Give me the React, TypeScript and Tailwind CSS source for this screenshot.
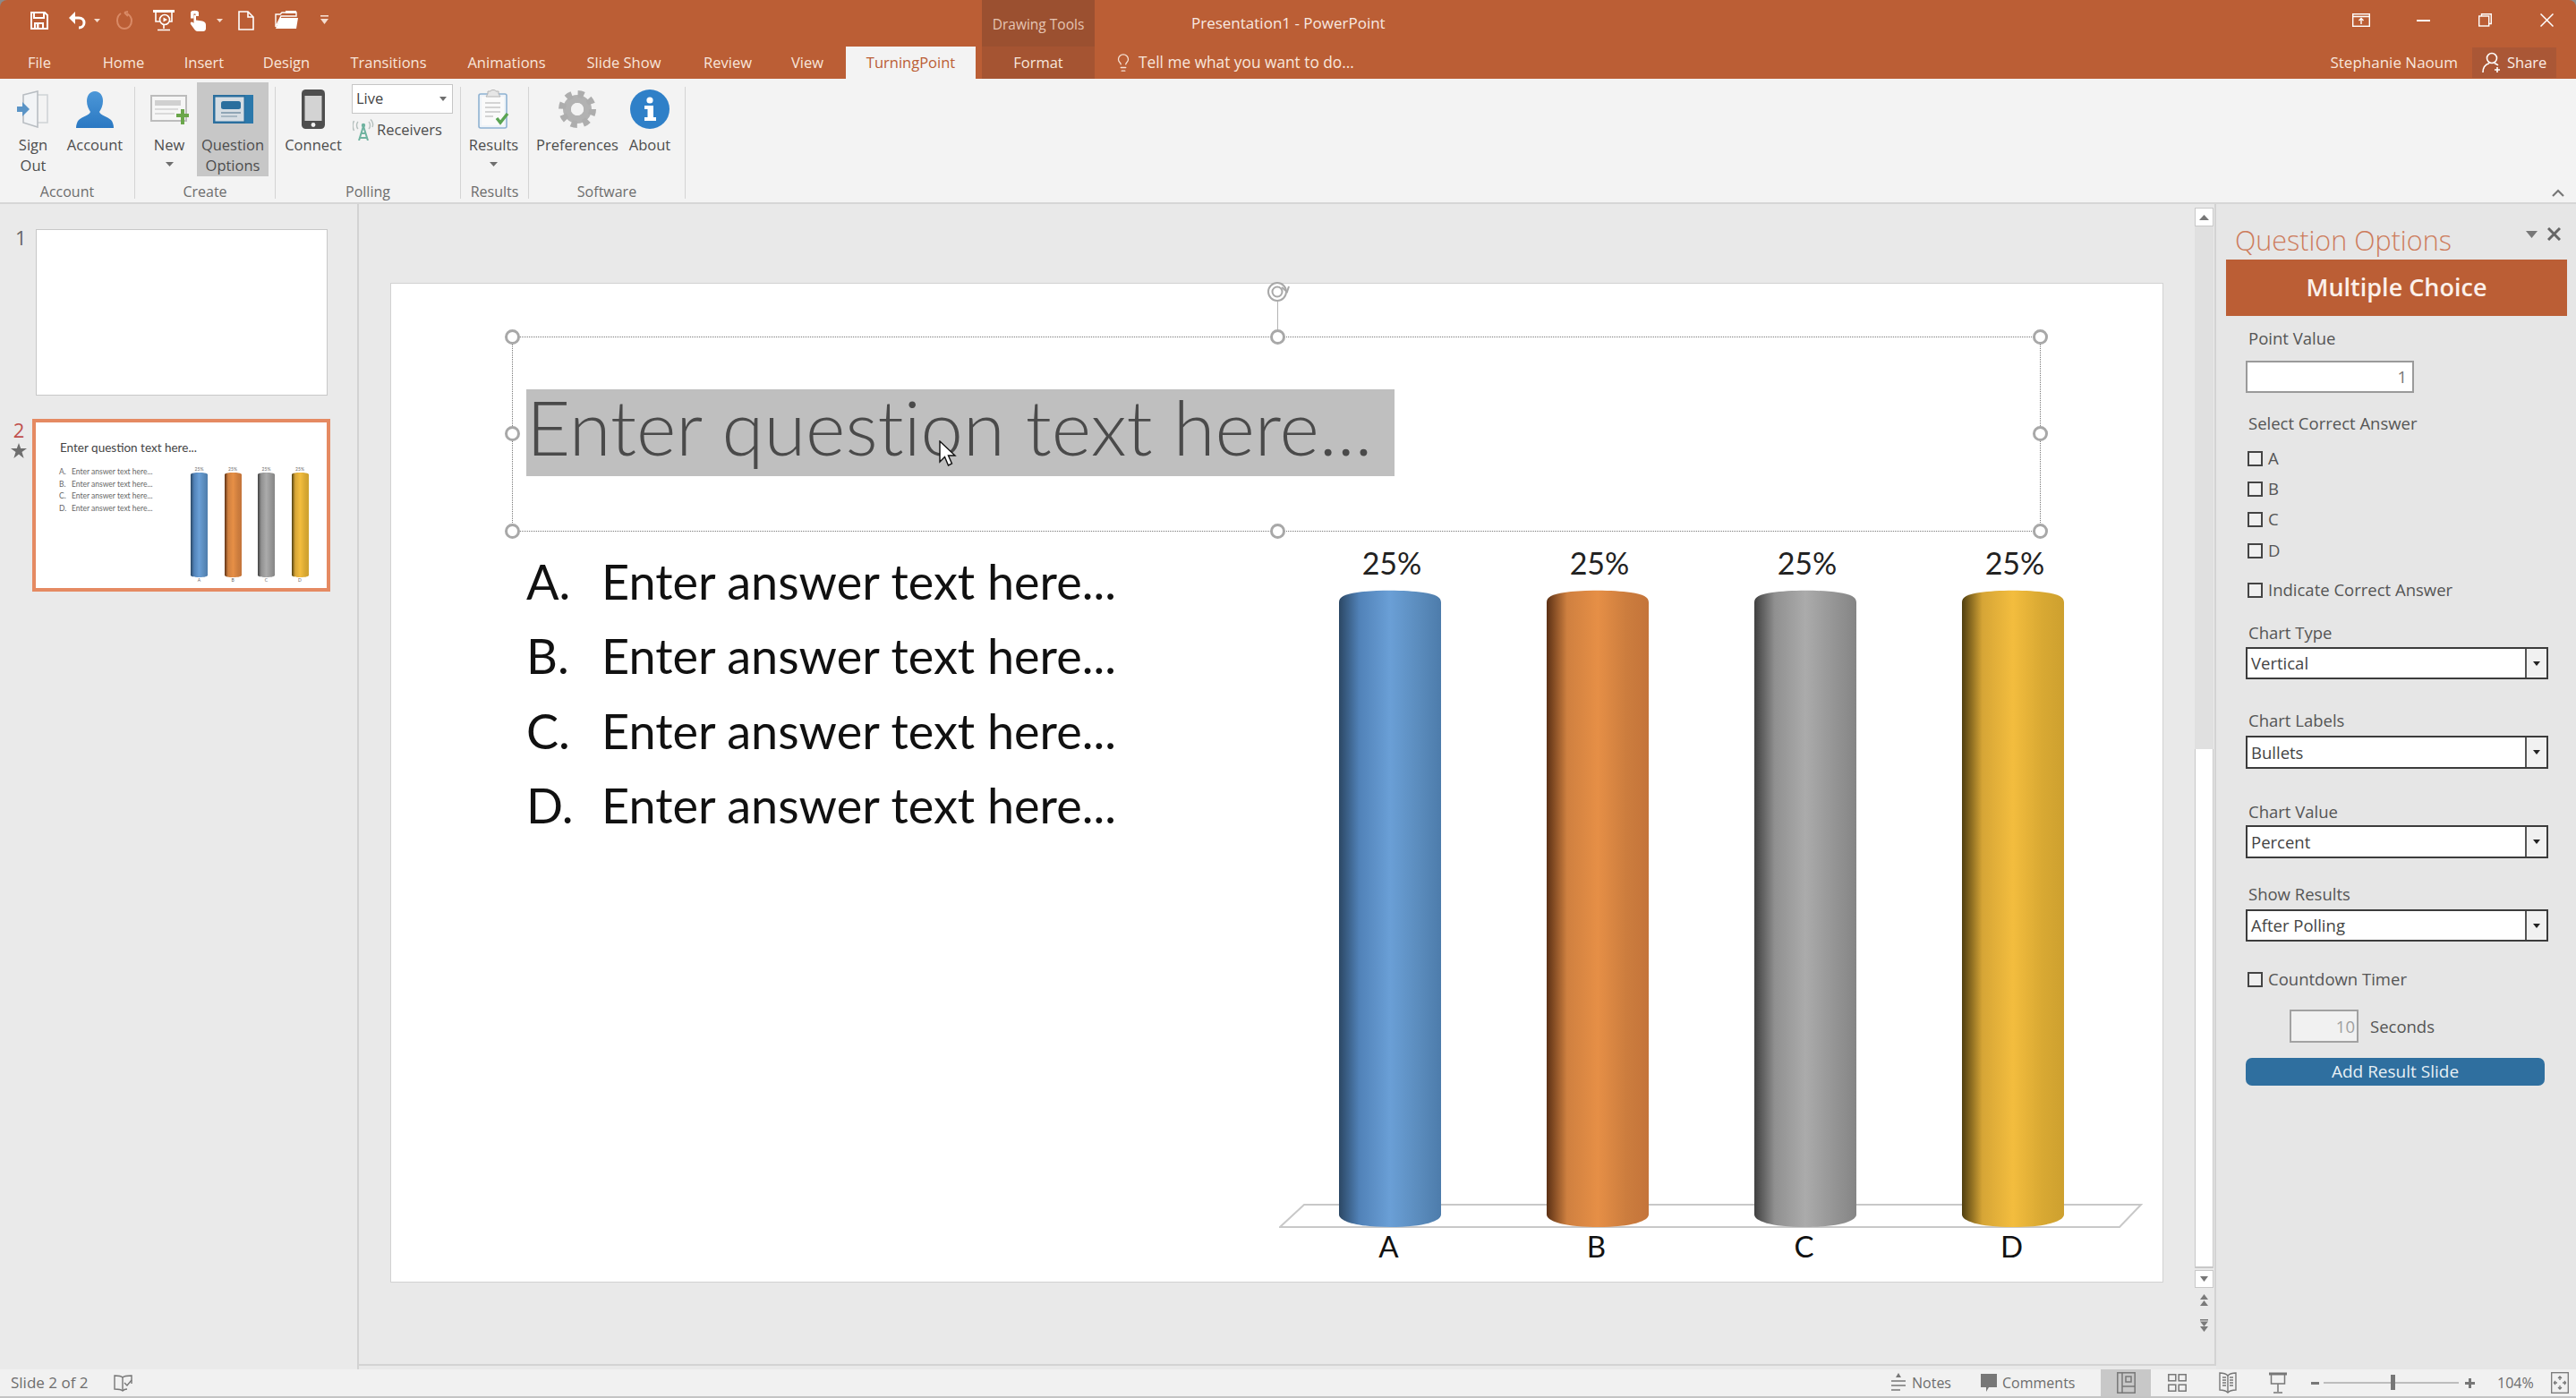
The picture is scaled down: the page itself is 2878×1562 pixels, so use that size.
import React from "react";
import { Lightbulb } from "lucide-react";

function Caret({ className = "", color = "#6e6e6e", w = 9, h = 5 }: { className?: string; color?: string; w?: number; h?: number }) {
  return (
    <svg width={w} height={h} viewBox="0 0 10 6" preserveAspectRatio="none" className={className}>
      <path d="M0 0H10L5 6Z" fill={color} />
    </svg>
  );
}

type CylProps = { id: string; w: number; h: number; c: string[] };
function Cyl({ id, w, h, c }: CylProps) {
  return (
    <svg width={w} height={h} viewBox="0 0 114 712" preserveAspectRatio="none" className="block">
      <defs>
        <linearGradient id={id} x1="0" x2="1" y1="0" y2="0">
          <stop offset="0" stopColor={c[0]} />
          <stop offset="0.2" stopColor={c[1]} />
          <stop offset="0.5" stopColor={c[2]} />
          <stop offset="0.78" stopColor={c[3]} />
          <stop offset="1" stopColor={c[4]} />
        </linearGradient>
      </defs>
      <path
        d="M0 14C0 8 6 5 20 3C40 0 74 0 94 3C108 5 114 8 114 14V698C114 705 96 712 57 712C18 712 0 705 0 698Z"
        fill={`url(#${id})`}
      />
    </svg>
  );
}

const BLUE = ["#2b4764", "#5182b8", "#6a9fd6", "#5b8cbd", "#4d7cab"];
const AMBER = ["#5b3014", "#cf8040", "#e68f46", "#cc7d3e", "#c4743a"];
const GRAY = ["#3f3f3f", "#909090", "#ababab", "#959595", "#858585"];
const GOLD = ["#4f3e10", "#d6a536", "#f3bd3e", "#d9a933", "#cda02f"];

/* ---------- title bar icons ---------- */
function SaveIcon() {
  return (
    <svg width="22" height="22" viewBox="0 0 22 22" fill="none" stroke="#fff" strokeWidth="2">
      <path d="M2 2H17L20 5V20H2Z" />
      <path d="M5 2V8H16V2" />
      <path d="M6 20V14H15V20" />
      <rect x="8" y="15" width="2.5" height="5" fill="#fff" stroke="none" />
    </svg>
  );
}
function UndoIcon({ color = "#fff" }: { color?: string }) {
  return (
    <svg width="20" height="22" viewBox="0 0 20 22" fill="none">
      <path d="M6 8H12C16 8 18 10.5 18 13.5C18 17 15 19 12 19" stroke={color} strokeWidth="3" />
      <path d="M8 1V15L1 8Z" fill={color} />
    </svg>
  );
}
function RedoIcon() {
  return (
    <svg width="18" height="22" viewBox="0 0 18 22" fill="none" stroke="#d98a66" strokeWidth="2">
      <path d="M5 3C2 5 1 8 1 11C1 16 4 20 9 20C14 20 17 16 17 11C17 8 15 5 12 3" />
      <path d="M9 2L13 1M9 2L13 6" />
    </svg>
  );
}
function PresenterIcon() {
  return (
    <svg width="24" height="24" viewBox="0 0 24 24" fill="none" stroke="#fff" strokeWidth="1.6">
      <path d="M0 1.5H24" strokeWidth="3" />
      <path d="M3 3V13H8M21 3V13H18" />
      <circle cx="13" cy="11" r="5.5" />
      <path d="M11.5 8.5L16 11L11.5 13.5Z" fill="#fff" stroke="none" />
      <path d="M12 17V21M5 22.5H19" />
    </svg>
  );
}
function TouchIcon() {
  return (
    <svg width="19" height="24" viewBox="0 0 19 24">
      <path d="M1 3C1 0 10 0 10 3V7H6.5V4.5H4.5V9.5H1Z" fill="#fff" />
      <path d="M4.5 7C4.5 5.2 7 5.2 7 7V11.5L14 12.5C17 13 18 15 18 17V21C18 23 16.5 24 15 24H8.5C7 24 6 23 5 21.5L1 16C0 14 2 12.5 3.5 14L4.5 15Z" fill="#fff" />
    </svg>
  );
}
function NewDocIcon() {
  return (
    <svg width="18" height="22" viewBox="0 0 18 22" fill="none" stroke="#fff" strokeWidth="1.6">
      <path d="M1 1H11L17 7V21H1Z" />
      <path d="M11 1V7H17" />
    </svg>
  );
}
function OpenIcon() {
  return (
    <svg width="26" height="22" viewBox="0 0 26 22">
      <path d="M1 4H6L8 2H24V6H7L1 18Z" fill="none" stroke="#fff" strokeWidth="1.4" />
      <path d="M6 8H26L24 20H1Z" fill="#fff" />
      <path d="M12 0H24V3H12Z" fill="#fff" />
    </svg>
  );
}
function CustomizeIcon() {
  return (
    <svg width="9" height="11" viewBox="0 0 9 11">
      <path d="M0 0H9V1.6H0Z" fill="#f4dccf" />
      <path d="M0 4H9L4.5 10Z" fill="#f4dccf" />
    </svg>
  );
}

/* ---------- ribbon icons ---------- */
function SignOutIcon() {
  return (
    <svg width="36" height="42" viewBox="0 0 36 42" fill="none">
      <path d="M7 5H34V36H7" stroke="#d0d3d6" strokeWidth="1.6" />
      <path d="M7 5L23 1V41L7 36Z" fill="#f2f4f6" stroke="#b8bdc2" strokeWidth="1.6" />
      <path d="M0 18H6V13L14 21L6 29V24H0Z" fill="#5a94c6" />
    </svg>
  );
}
function AccountIcon() {
  return (
    <svg width="42" height="41" viewBox="0 0 42 41">
      <defs>
        <linearGradient id="acc" x1="0" x2="0" y1="0" y2="1">
          <stop offset="0" stopColor="#4c97d8" />
          <stop offset="1" stopColor="#2a78c2" />
        </linearGradient>
      </defs>
      <path
        d="M21 0C27 0 30 5 30 11C30 16 28 20 26 23C27 27 35 28 39 32C41 34 42 38 42 41H0C0 38 1 34 3 32C7 28 15 27 16 23C14 20 12 16 12 11C12 5 15 0 21 0Z"
        fill="url(#acc)"
      />
    </svg>
  );
}
function NewIcon() {
  return (
    <svg width="43" height="33" viewBox="0 0 43 33">
      <rect x="1" y="1" width="39" height="28" fill="#f6f6f6" stroke="#bcbcbc" strokeWidth="2" />
      <rect x="5" y="6" width="29" height="6" fill="#d0d0d0" />
      <rect x="5" y="15" width="26" height="2" fill="#dadada" />
      <rect x="5" y="20" width="22" height="2" fill="#dadada" />
      <path d="M29 21H34V16H38V21H43V25H38V33H34V25H29Z" fill="#6aa64a" />
    </svg>
  );
}
function QuestionIcon() {
  return (
    <svg width="45" height="32" viewBox="0 0 45 32">
      <rect x="0" y="0" width="45" height="32" fill="#2b6f9e" />
      <rect x="2.5" y="2.5" width="32" height="27" fill="#d6dde3" />
      <rect x="36" y="0" width="9" height="32" fill="#2b78ab" />
      <rect x="9" y="7" width="22" height="9" rx="2.5" fill="#2b6f9e" />
      <rect x="9" y="19" width="22" height="2" fill="#8fa5b5" />
      <rect x="9" y="23" width="18" height="2" fill="#a7b7c3" />
    </svg>
  );
}
function PhoneIcon() {
  return (
    <svg width="26" height="44" viewBox="0 0 26 44">
      <rect width="26" height="44" rx="4.5" fill="#4e4e4e" />
      <rect x="3.5" y="7" width="19" height="28" fill="#d3d3d3" />
      <circle cx="13" cy="39.5" r="2.4" fill="#f2f2f2" />
    </svg>
  );
}
function ReceiverIcon() {
  return (
    <svg width="24" height="24" viewBox="0 0 24 24" fill="none">
      <path d="M12 8L7 24M12 8L17 24M9.5 16H14.5M8 21H16" stroke="#6fb3a0" strokeWidth="2" />
      <circle cx="12" cy="7" r="2.2" fill="#6fb3a0" />
      <path d="M6 3C4 5 4 9 6 11M1.5 2C-0.5 6 -0.5 9 1.5 13M18 3C20 5 20 9 18 11M20 0.5C23 3 23 7 22 9" stroke="#b4bfbd" strokeWidth="1.4" />
    </svg>
  );
}
function ResultsIcon() {
  return (
    <svg width="36" height="44" viewBox="0 0 36 44" fill="none">
      <rect x="1" y="5" width="31" height="38" rx="2" fill="#eef3f8" stroke="#8fb2d2" strokeWidth="1.6" />
      <rect x="4" y="8" width="25" height="32" fill="#fafafa" />
      <path d="M11 5V2H14C14 0 20 0 20 2H23V5L25 8H9Z" fill="#e6e6e6" stroke="#b4b4b4" strokeWidth="1" />
      <path d="M8 15H25M8 20H25M8 25H25M8 30H17" stroke="#c8c8c8" strokeWidth="1.6" />
      <path d="M21 32L25 37L33 27" stroke="#5aa452" strokeWidth="3.4" />
    </svg>
  );
}
function GearIcon() {
  return (
    <svg width="42" height="42" viewBox="0 0 42 42" fill="none">
      <circle cx="21" cy="21" r="11.5" stroke="#b2b2b2" strokeWidth="9" />
      <circle cx="21" cy="21" r="17" stroke="#adadad" strokeWidth="8" strokeDasharray="6.68 6.68" />
      <circle cx="21" cy="21" r="7" fill="#f3f3f3" />
    </svg>
  );
}
function InfoIcon() {
  return (
    <svg width="44" height="44" viewBox="0 0 44 44">
      <circle cx="22" cy="22" r="22" fill="#2f80c8" />
      <circle cx="22" cy="12" r="3.6" fill="#fff" />
      <path d="M16 18H26V31H29V35H16V31H19.5V22H16Z" fill="#fff" />
    </svg>
  );
}

function RButton({ icon, lines, w, cls = "", caret = false }: { icon: React.ReactNode; lines: string[]; w: string; cls?: string; caret?: boolean }) {
  return (
    <div className={`flex flex-col items-center ${w} ${cls}`}>
      <div className="flex h-[58px] w-full items-center justify-center pt-[2px]">{icon}</div>
      {lines.map((t) => (
        <div key={t} className="whitespace-nowrap text-center text-[16.5px] leading-[23px] text-[#4d4d4d]">
          {t}
        </div>
      ))}
      {caret && <Caret className="mt-[8px]" />}
    </div>
  );
}

function RGroup({ w, label, children }: { w: string; label: string; children: React.ReactNode }) {
  return (
    <div className={`flex flex-col ${w}`}>
      <div className="flex h-[114px] pt-[4px]">{children}</div>
      <div className="h-[24px] text-center text-[16px] leading-[24px] text-[#6d6d6d]">{label}</div>
    </div>
  );
}
const RSep = () => <div className="mt-[9px] h-[125px] w-[1px] bg-[#d4d4d4]" />;

function Tab({ t, w }: { t: string; w: string }) {
  return <div className={`${w} text-center text-[16.5px] leading-[36px] text-[#f8e6dc]`}>{t}</div>;
}

/* ---------- task pane ---------- */
function Check({ label, mt }: { label: string; mt: string }) {
  return (
    <div className={`flex h-[24px] items-center ${mt}`}>
      <div className="ml-[2px] h-[17px] w-[17px] border-2 border-[#444] bg-[#f0f0f0]" />
      <span className="ml-[6px] text-[18.5px] text-[#555]">{label}</span>
    </div>
  );
}
function Label({ t, mt }: { t: string; mt: string }) {
  return <div className={`ml-[3px] h-[24px] text-[18.5px] leading-[24px] text-[#555] ${mt}`}>{t}</div>;
}
function Select({ v, mt, h }: { v: string; mt: string; h: string }) {
  return (
    <div className={`flex w-[338px] border-2 border-[#3c3c3c] bg-white ${mt} ${h}`}>
      <div className="flex flex-1 items-center pl-[4px] text-[18.5px] text-[#444]">{v}</div>
      <div className="flex w-[24px] items-center justify-center border-l-2 border-[#555] bg-[#f1f1f1]">
        <Caret color="#222" w={8} h={5} />
      </div>
    </div>
  );
}

function Handle({ cls }: { cls: string }) {
  return <div className={`absolute h-[17px] w-[17px] rounded-full border-[3px] border-[#a8a8a8] bg-white ${cls}`} />;
}

const answers = ["A.", "B.", "C.", "D."];
const bars: [string, string, string[]][] = [
  ["A", "a", BLUE],
  ["B", "b", AMBER],
  ["C", "c", GRAY],
  ["D", "d", GOLD],
];

export default function App() {
  return (
    <div className="flex h-[1562px] w-[2878px] flex-col overflow-hidden bg-[#8a8a8a] font-['Open_Sans',sans-serif]">
      {/* title bar */}
      <div className="flex h-[88px] overflow-hidden rounded-t-[8px] bg-[#bb5e35]">
        <div className="flex w-[1097px] flex-col">
          <div className="flex h-[52px] items-center pb-[7px] pl-[33px]">
            <SaveIcon />
            <div className="ml-[21px]"><UndoIcon /></div>
            <Caret color="#f4dccf" w={7} h={4} className="ml-[9px]" />
            <div className="ml-[18px]"><RedoIcon /></div>
            <div className="ml-[23px]"><PresenterIcon /></div>
            <div className="ml-[17px]"><TouchIcon /></div>
            <Caret color="#f4dccf" w={7} h={4} className="ml-[11px]" />
            <div className="ml-[17px]"><NewDocIcon /></div>
            <div className="ml-[23px]"><OpenIcon /></div>
            <div className="ml-[25px]"><CustomizeIcon /></div>
          </div>
          <div className="flex h-[36px]">
            <Tab t="File" w="w-[88px]" />
            <Tab t="Home" w="w-[100px]" />
            <Tab t="Insert" w="w-[80px]" />
            <Tab t="Design" w="w-[104px]" />
            <Tab t="Transitions" w="w-[124px]" />
            <Tab t="Animations" w="w-[140px]" />
            <Tab t="Slide Show" w="w-[122px]" />
            <Tab t="Review" w="w-[110px]" />
            <Tab t="View" w="w-[68px]" />
            <div className="ml-[9px] w-[145px] bg-[#f3f3f3] text-center text-[16.5px] leading-[36px] text-[#bb5e35]">TurningPoint</div>
          </div>
        </div>
        <div className="flex w-[126px] flex-col bg-[#9b5030]">
          <div className="h-[52px] text-center text-[15.5px] leading-[54px] text-[#e6c5b4]">Drawing Tools</div>
          <div className="h-[36px] bg-[#a55432] text-center text-[16.5px] leading-[36px] text-[#f8e6dc]">Format</div>
        </div>
        <div className="flex flex-1 flex-col">
          <div className="flex h-[52px] items-center">
            <span className="ml-[108px] text-[17px] text-[#f8e9e1]">Presentation1 - PowerPoint</span>
            <div className="ml-auto flex items-center pb-[7px] pr-[25px]">
              <svg width="20" height="15" viewBox="0 0 20 15" fill="none" stroke="#fff" strokeWidth="1.4">
                <rect x="0.7" y="0.7" width="18.6" height="13.6" />
                <path d="M0.7 3.5H19.3M10 12V6M7.5 8L10 5.5L12.5 8" />
              </svg>
              <div className="ml-[52px] h-[2px] w-[15px] bg-[#fff]" />
              <svg className="ml-[54px]" width="15" height="15" viewBox="0 0 15 15" fill="none" stroke="#fff" strokeWidth="1.4">
                <rect x="0.7" y="3" width="11" height="11" />
                <path d="M3.5 3V0.7H14.3V11.5H11.7" />
              </svg>
              <svg className="ml-[54px]" width="15" height="15" viewBox="0 0 15 15" stroke="#fff" strokeWidth="1.5">
                <path d="M0.5 0.5L14.5 14.5M14.5 0.5L0.5 14.5" />
              </svg>
            </div>
          </div>
          <div className="flex h-[36px] items-center">
            <Lightbulb className="ml-[21px] h-[22px] w-[22px]" color="#f6e2d6" strokeWidth={1.4} />
            <span className="ml-[6px] text-[17.3px] text-[#f8e6dc]">Tell me what you want to do...</span>
            <span className="ml-auto mr-[16px] text-[17px] text-[#f8e6dc]">Stephanie Naoum</span>
            <div className="mr-[22px] flex h-[34px] w-[94px] items-center bg-[#aa5736] pl-[11px]">
              <svg width="23" height="24" viewBox="0 0 23 24" fill="none" stroke="#fff" strokeWidth="1.6">
                <circle cx="11" cy="7" r="5.5" />
                <path d="M1 23C1 17 4 14 8 12.8M14 12.8C15.5 13.3 17 14 18 15" />
                <path d="M17 17V23M14 20H20" />
              </svg>
              <span className="ml-[5px] text-[16.5px] text-[#fbeee7]">Share</span>
            </div>
          </div>
        </div>
      </div>

      {/* ribbon */}
      <div className="flex h-[140px] border-b-2 border-[#d6d6d6] bg-[#f3f3f3]">
        <RGroup w="w-[150px]" label="Account">
          <RButton w="w-[74px]" icon={<SignOutIcon />} lines={["Sign", "Out"]} />
          <RButton w="w-[64px]" icon={<AccountIcon />} lines={["Account"]} />
        </RGroup>
        <RSep />
        <RGroup w="w-[156px]" label="Create">
          <RButton w="w-[58px]" cls="ml-[9px]" icon={<NewIcon />} lines={["New"]} caret />
          <div className="ml-[2px] h-[105px] w-[80px] bg-[#c7c7c7]">
            <RButton w="w-[80px]" icon={<QuestionIcon />} lines={["Question", "Options"]} />
          </div>
        </RGroup>
        <RSep />
        <RGroup w="w-[206px]" label="Polling">
          <RButton w="w-[56px]" cls="ml-[14px]" icon={<PhoneIcon />} lines={["Connect"]} />
          <div className="ml-[15px] flex flex-col">
            <div className="mt-[2px] flex h-[33px] w-[113px] items-center justify-between border border-[#c6c6c6] bg-white pl-[4px] pr-[6px] text-[16.5px] text-[#444]">
              Live
              <Caret w={8} h={5} />
            </div>
            <div className="mt-[5px] flex h-[26px] items-center pl-[1px]">
              <ReceiverIcon />
              <span className="ml-[3px] text-[16.5px] text-[#4d4d4d]">Receivers</span>
            </div>
          </div>
        </RGroup>
        <RSep />
        <RGroup w="w-[75px]" label="Results">
          <RButton w="w-[73px]" icon={<ResultsIcon />} lines={["Results"]} caret />
        </RGroup>
        <RSep />
        <RGroup w="w-[174px]" label="Software">
          <RButton w="w-[96px]" cls="ml-[6px]" icon={<GearIcon />} lines={["Preferences"]} />
          <RButton w="w-[66px]" icon={<InfoIcon />} lines={["About"]} />
        </RGroup>
        <RSep />
        <div className="ml-auto mr-[13px] flex flex-col justify-end pb-[6px]">
          <svg width="14" height="9" viewBox="0 0 14 9" fill="none" stroke="#777" strokeWidth="2.2">
            <path d="M1 8L7 2L13 8" />
          </svg>
        </div>
      </div>

      {/* middle */}
      <div className="flex h-[1302px] bg-[#e9e9e9]">
        {/* thumbnails */}
        <div className="w-[401px] border-r-2 border-[#d3d3d3] bg-[#eaeaea] pt-[28px]">
          <div className="flex">
            <div className="w-[40px] pl-[17px] text-[22px] leading-[18px] text-[#666]">1</div>
            <div className="h-[186px] w-[326px] border border-[#c8c8c8] bg-white" />
          </div>
          <div className="mt-[26px] flex">
            <div className="flex w-[36px] flex-col items-center pl-[6px]">
              <span className="h-[24px] text-[22px] leading-[24px] text-[#c0504d]">2</span>
              <svg className="mt-[3px]" width="18" height="17" viewBox="0 0 18 17" fill="#6e6e6e">
                <path d="M9 0L11.2 6H18L12.5 10L14.6 17L9 12.6L3.4 17L5.5 10L0 6H6.8Z" />
              </svg>
            </div>
            <div className="flex h-[193px] w-[333px] flex-col border-4 border-[#e58a62] bg-white font-['Lato',sans-serif]">
              <div className="ml-[27px] mt-[20px] h-[16px] text-[13.5px] leading-[16px] text-[#444]">Enter question text here...</div>
              <div className="mt-[13px] flex">
                <div className="ml-[26px] w-[147px]">
                  {answers.map((a) => (
                    <div key={a} className="flex h-[13.5px] text-[8.5px] leading-[13.5px] text-[#666]">
                      <span className="w-[14px]">{a}</span>
                      <span>Enter answer text here...</span>
                    </div>
                  ))}
                </div>
                <div className="flex gap-[18.5px]">
                  {bars.map(([l, k, c]) => (
                    <div key={k} className="flex w-[19px] flex-col items-center">
                      <span className="h-[7px] text-[5px] leading-[7px] text-[#666]">25%</span>
                      <Cyl id={`t${k}`} w={19} h={117} c={c} />
                      <span className="text-[5px] leading-[7px] text-[#666]">{l}</span>
                    </div>
                  ))}
                </div>
              </div>
            </div>
          </div>
        </div>

        {/* editor */}
        <div className="flex h-[1298px] w-[2075px] border-b-2 border-r-2 border-[#d3d3d3] bg-[#e9e9e9]">
          <div className="w-[2051px] pl-[35px] pt-[88px]">
            <div className="relative flex h-[1117px] w-[1981px] flex-col border border-[#d2d2d2] bg-white font-['Lato',sans-serif] [font-variant-ligatures:none]">
              {/* rotate */}
              <svg className="absolute left-[978px] top-[-4px]" width="26" height="26" viewBox="0 0 26 26" fill="none" stroke="#a8a8a8" strokeWidth="2">
                <circle cx="12" cy="13" r="10" />
                <circle cx="12" cy="13" r="5.5" />
                <path d="M17 8L23 13L25 7" />
              </svg>
              <div className="absolute left-[990px] top-[20px] h-[40px] w-[1px] bg-[#b4b4b4]" />
              {/* title placeholder */}
              <div className="relative ml-[135px] mt-[59px] h-[218px] w-[1708px] border border-dotted border-[#777]">
                <Handle cls="left-[-9px] top-[-9px]" />
                <Handle cls="left-[846px] top-[-9px]" />
                <Handle cls="right-[-9px] top-[-9px]" />
                <Handle cls="left-[-9px] top-[99px]" />
                <Handle cls="right-[-9px] top-[99px]" />
                <Handle cls="bottom-[-9px] left-[-9px]" />
                <Handle cls="bottom-[-9px] left-[846px]" />
                <Handle cls="bottom-[-9px] right-[-9px]" />
                <div className="ml-[15px] mt-[58px] h-[97px] w-[970px] whitespace-nowrap bg-[#bfbfbf] text-[85px] font-light leading-[97px] text-[#4a4a4a]">
                  <span className="relative top-[-7px]">Enter question text here...</span>
                </div>
                <svg className="absolute left-[476px] top-[115px]" width="20" height="29" viewBox="0 0 20 29">
                  <path d="M1 1V24L6.5 18.5L10.5 28L14.5 26L10.5 17H18Z" fill="#fff" stroke="#111" strokeWidth="1.4" />
                </svg>
              </div>
              {/* body */}
              <div className="flex">
                <div className="ml-[151px] mt-[14px] w-[841px]">
                  {answers.map((a) => (
                    <div key={a} className="flex h-[83.3px] items-center text-[54px] text-[#111]">
                      <span className="w-[84px]">{a}</span>
                      <span>Enter answer text here...</span>
                    </div>
                  ))}
                </div>
                <div className="relative w-[965px] pl-[67px] pt-[16px]">
                  <svg className="absolute left-0 top-[751px]" width="966" height="27" viewBox="0 0 966 27" fill="none">
                    <path d="M1 26L28 1H963L939 26Z" fill="#fff" stroke="#c8c8c8" strokeWidth="2" />
                  </svg>
                  <div className="relative flex gap-[118px]">
                    {bars.map(([l, k, c]) => (
                      <div key={k} className="flex w-[114px] flex-col items-center">
                        <div className="mt-[-3px] h-[47px] pl-[4px] text-[34px] leading-[44px] text-[#222]">25%</div>
                        <div className="mt-[5px]">
                          <Cyl id={`m${k}`} w={114} h={712} c={c} />
                        </div>
                        <div className="mt-[1px] h-[40px] pr-[3px] text-[33px] leading-[40px] text-[#111]">{l}</div>
                      </div>
                    ))}
                  </div>
                </div>
              </div>
            </div>
          </div>
          {/* scrollbar */}
          <div className="flex w-[21px] flex-col items-center pt-[4px]">
            <div className="flex h-[21px] w-[21px] items-center justify-center border border-[#c8c8c8] bg-white">
              <Caret color="#777" w={11} h={6} className="rotate-180" />
            </div>
            <div className="h-[584px] w-full bg-[#e0e0e0]" />
            <div className="h-[580px] w-full border-x border-b-2 border-[#c8c8c8] bg-white" />
            <div className="mt-[2px] flex h-[20px] w-[21px] items-center justify-center border border-[#c8c8c8] bg-white">
              <Caret color="#777" w={9} h={6} />
            </div>
            <svg className="mt-[7px]" width="11" height="14" viewBox="0 0 11 14" fill="#7a7a7a">
              <path d="M5.5 0L10 6H1ZM5.5 7L10 13H1Z" />
            </svg>
            <svg className="mt-[14px]" width="11" height="14" viewBox="0 0 11 14" fill="#7a7a7a">
              <path d="M1 0H10V1.6H1ZM1 2.5H10L5.5 8ZM1 8H10L5.5 14Z" />
            </svg>
          </div>
        </div>

        {/* task pane */}
        <div className="flex flex-1 flex-col bg-[#e6e6e6] pl-[11px]">
          <div className="flex h-[62px] w-[381px] items-start pt-[18px]">
            <span className="ml-[10px] whitespace-nowrap text-[30.5px] font-light leading-[44px] text-[#cd7c5c]">Question Options</span>
            <div className="ml-auto mr-[7px] mt-[8px] flex items-center">
              <Caret color="#777" w={13} h={8} />
              <svg className="ml-[11px]" width="15" height="15" viewBox="0 0 15 15" stroke="#666" strokeWidth="3">
                <path d="M1 1L14 14M14 1L1 14" />
              </svg>
            </div>
          </div>
          <div className="flex h-[63px] w-[381px] items-center justify-center bg-[#bb5e35] text-[27px] font-semibold text-[#fbf0ea]">Multiple Choice</div>
          <div className="flex flex-col pl-[22px]">
            <Label t="Point Value" mt="mt-[13px]" />
            <div className="mt-[13px] flex h-[36px] w-[188px] items-center justify-end border-2 border-[#9a9a9a] bg-white pr-[6px] text-[18.5px] text-[#777]">1</div>
            <Label t="Select Correct Answer" mt="mt-[22px]" />
            <Check label="A" mt="mt-[15px]" />
            <Check label="B" mt="mt-[10px]" />
            <Check label="C" mt="mt-[10px]" />
            <Check label="D" mt="mt-[11px]" />
            <Check label="Indicate Correct Answer" mt="mt-[20px]" />
            <Label t="Chart Type" mt="mt-[24px]" />
            <Select v="Vertical" mt="mt-[4px]" h="h-[36px]" />
            <Label t="Chart Labels" mt="mt-[34px]" />
            <Select v="Bullets" mt="mt-[5px]" h="h-[37px]" />
            <Label t="Chart Value" mt="mt-[36px]" />
            <Select v="Percent" mt="mt-[3px]" h="h-[37px]" />
            <Label t="Show Results" mt="mt-[28px]" />
            <Select v="After Polling" mt="mt-[5px]" h="h-[36px]" />
            <Check label="Countdown Timer" mt="mt-[30px]" />
            <div className="mt-[22px] flex h-[37px] items-center">
              <div className="ml-[49px] flex h-[37px] w-[77px] items-center justify-end border-2 border-[#a2a2a2] bg-[#f1f1f1] pr-[2px] text-[18.5px] text-[#a0a0a0]">10</div>
              <span className="ml-[13px] text-[18.5px] text-[#555]">Seconds</span>
            </div>
            <div className="mt-[17px] flex h-[31px] w-[334px] items-center justify-center rounded-[7px] bg-[#2f6f9f] text-[19px] text-[#e6eff5]">Add Result Slide</div>
          </div>
        </div>
      </div>

      {/* status bar */}
      <div className="flex h-[32px] items-center border-b-2 border-[#c4c4c4] bg-[#f1f1f1] text-[16px] text-[#6d6d6d]">
        <span className="ml-[12px] w-[90px] whitespace-nowrap text-[17px]">Slide 2 of 2</span>
        <svg className="ml-[25px]" width="21" height="22" viewBox="0 0 21 22" fill="none" stroke="#777" strokeWidth="1.4">
          <path d="M10 5C8 3 4 3 1 3V18C4 18 8 18 10 20C12 18 14 18 15 18" />
          <path d="M10 5V20M10 5C12 3 15 3 20 3V12" />
          <path d="M12 11L15 14L20 8" />
        </svg>
        <div className="ml-auto flex h-full items-center">
          <svg width="16" height="22" viewBox="0 0 16 22" fill="none" stroke="#777" strokeWidth="1.6">
            <path d="M8 0L11 5H5Z" fill="#777" stroke="none" />
            <path d="M0 9H16M0 14H16M0 19H10" />
          </svg>
          <span className="ml-[7px] w-[45px]">Notes</span>
          <svg className="ml-[32px]" width="18" height="22" viewBox="0 0 18 22" fill="#777">
            <path d="M0 1H18V16H9L6 21V16H0Z" />
          </svg>
          <span className="ml-[6px] w-[81px] whitespace-nowrap">Comments</span>
          <div className="ml-[29px] flex h-full w-[56px] items-center justify-center bg-[#c8c8c8]">
            <svg width="21" height="24" viewBox="0 0 21 24" fill="none" stroke="#777" strokeWidth="1.5">
              <rect x="0.8" y="0.8" width="19.4" height="22.4" />
              <path d="M6 0.8V23.2M6 16H20" />
              <rect x="10" y="5" width="6" height="6" />
            </svg>
          </div>
          <svg className="ml-[19px]" width="21" height="20" viewBox="0 0 21 20" fill="none" stroke="#777" strokeWidth="1.5">
            <rect x="0.8" y="0.8" width="8" height="7" />
            <rect x="12.2" y="0.8" width="8" height="7" />
            <rect x="0.8" y="12.2" width="8" height="7" />
            <rect x="12.2" y="12.2" width="8" height="7" />
          </svg>
          <svg className="ml-[36px]" width="20" height="24" viewBox="0 0 20 24" fill="none" stroke="#777" strokeWidth="1.4">
            <path d="M10 4C8 2 4 1 1 1V20C4 20 8 21 10 23C12 21 16 20 19 20V1C16 1 12 2 10 4Z" />
            <path d="M10 4V23M4 6H8M4 9H8M4 12H8M4 15H8M12 6H16M12 9H16M12 12H16M12 15H16" />
          </svg>
          <svg className="ml-[36px]" width="20" height="24" viewBox="0 0 20 24" fill="none" stroke="#777" strokeWidth="1.5">
            <path d="M0 2H20" strokeWidth="3" />
            <path d="M2.5 3V13H17.5V3M10 13V22M5 23H15" />
          </svg>
          <div className="ml-[27px] h-[3px] w-[9px] bg-[#777]" />
          <div className="relative ml-[5px] h-[2px] w-[151px] bg-[#bdbdbd]">
            <div className="absolute left-[75px] top-[-8px] h-[17px] w-[5px] bg-[#777]" />
          </div>
          <svg className="ml-[7px]" width="11" height="11" viewBox="0 0 11 11" fill="#777">
            <path d="M4 0H7V4H11V7H7V11H4V7H0V4H4Z" />
          </svg>
          <span className="ml-[25px] w-[41px] whitespace-nowrap">104%</span>
          <svg className="ml-[19px] mr-[8px]" width="20" height="24" viewBox="0 0 20 24" fill="none" stroke="#777" strokeWidth="1.3">
            <rect x="0.7" y="0.7" width="18.6" height="22.6" />
            <path d="M10 5V9M8 7L10 5L12 7M10 19V15M8 17L10 19L12 17M4 12H7M5 10L3.5 12L5 14M16 12H13M15 10L16.5 12L15 14" />
          </svg>
        </div>
      </div>
    </div>
  );
}
